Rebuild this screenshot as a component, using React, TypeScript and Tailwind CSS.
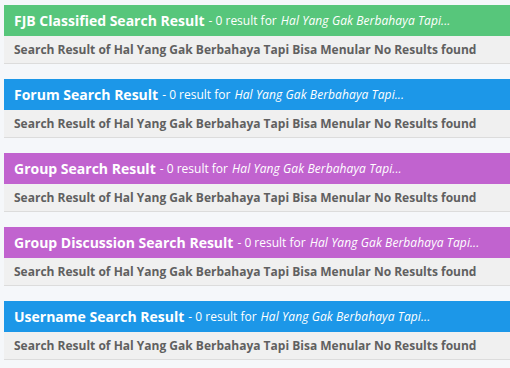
import React from 'react';

type Section = {
    title: string;
    color: string;
};

const QUERY = 'Hal Yang Gak Berbahaya Tapi...';
const FULL_QUERY = 'Hal Yang Gak Berbahaya Tapi Bisa Menular';

const sections: Section[] = [
    { title: 'FJB Classified Search Result', color: 'bg-[#57c67b]' },
    { title: 'Forum Search Result', color: 'bg-[#1c97e8]' },
    { title: 'Group Search Result', color: 'bg-[#c163cf]' },
    { title: 'Group Discussion Search Result', color: 'bg-[#c163cf]' },
    { title: 'Username Search Result', color: 'bg-[#1c97e8]' },
];

export default function App() {
    return (
        <div
            className="min-h-screen bg-[#f5f7fa] pl-[4px] pt-[5px] overflow-hidden"
            style={{ fontFamily: '"Open Sans", "Noto Sans", sans-serif' }}
        >
            {sections.map((s, i) => (
                <div key={i} className="mb-[15px]">
                    {/* Header bar */}
                    <div className={`${s.color} h-[31px] flex items-center px-[10px] text-white whitespace-nowrap`}>
                        <span className="font-bold text-[14px]">{s.title}</span>
                        <span className="text-[12px] ml-[4px]">- 0 result for</span>
                        <span className="text-[12px] italic ml-[4px] tracking-[0.1px]">{QUERY}</span>
                    </div>
                    {/* Body */}
                    <div className="h-[28px] bg-[#f0f0f0] border-b border-[#dcdcdc] flex items-center px-[10px] whitespace-nowrap">
                        <span className="font-bold text-[12px] text-[#606060]">
                            Search Result of {FULL_QUERY} No Results found
                        </span>
                    </div>
                </div>
            ))}
        </div>
    );
}
